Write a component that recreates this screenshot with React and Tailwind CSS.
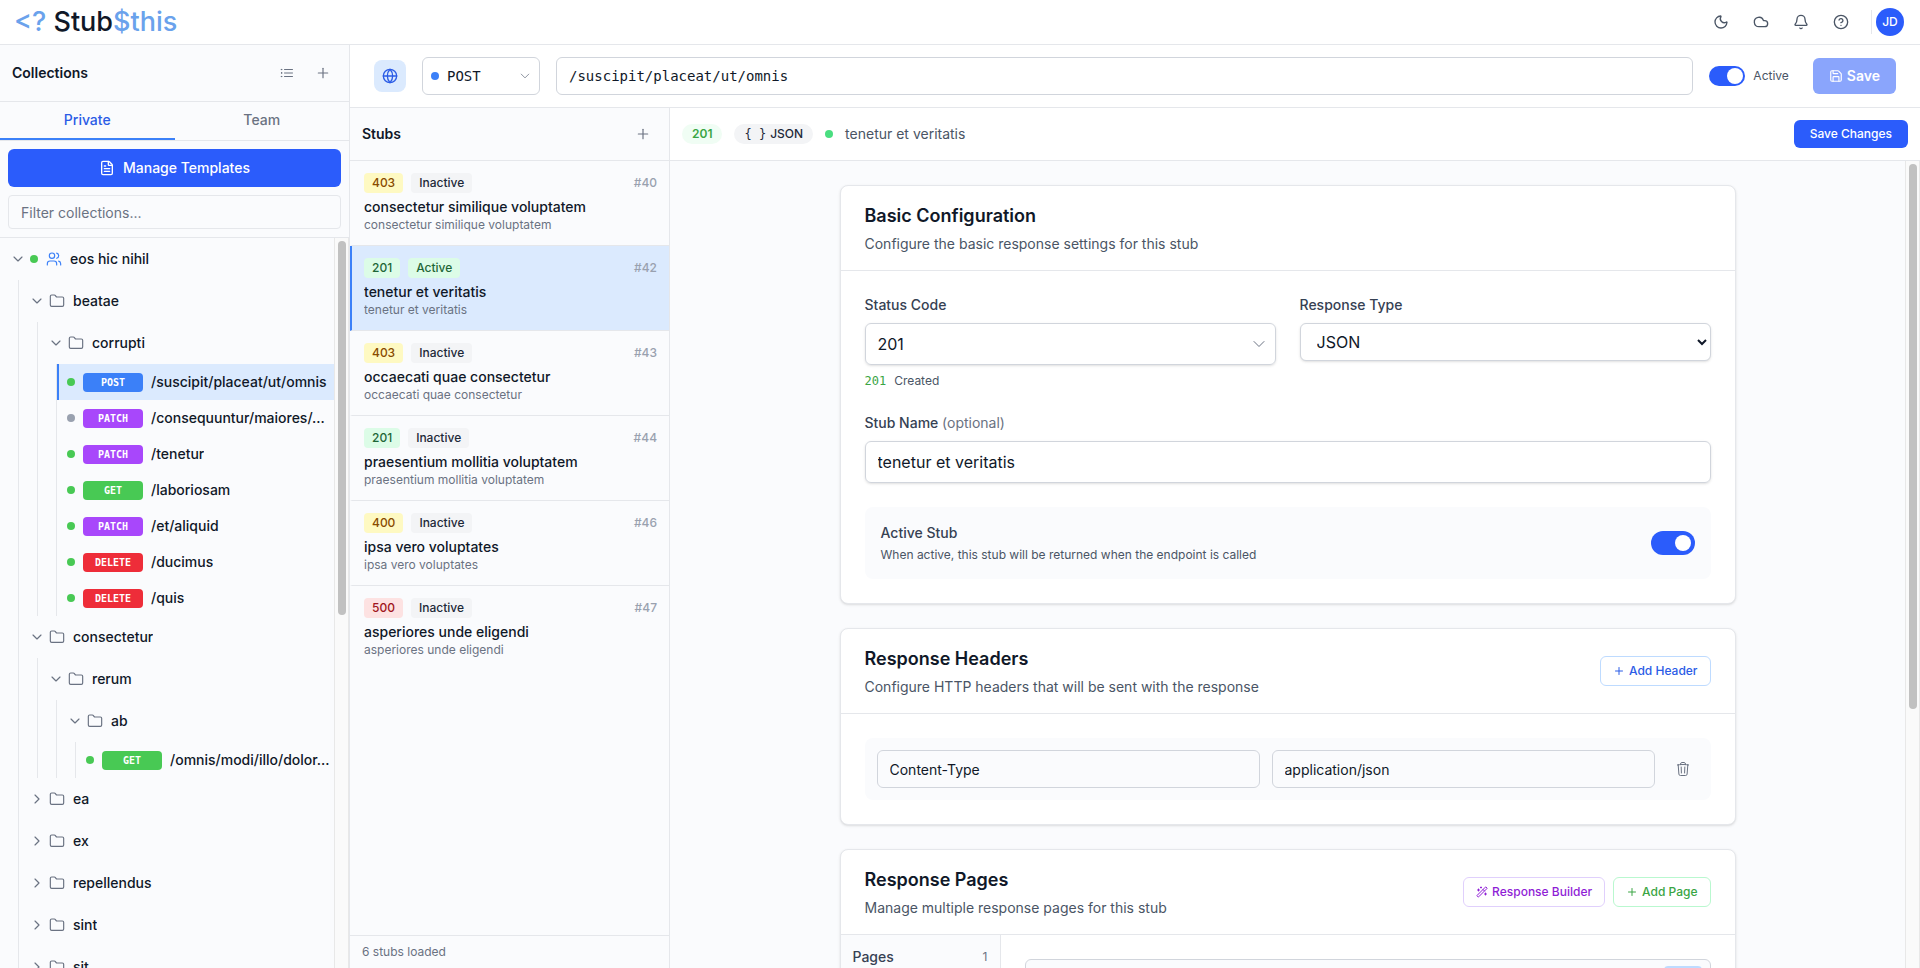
import React, { useState } from 'react';
import {
  Bell,
  ChevronDown as TreeDown,
  ChevronRight as TreeRight,
  CircleQuestionMark,
  Cloud,
  FileText,
  Folder,
  Globe,
  Moon,
  Plus,
  Save,
  Users,
  WandSparkles,
} from 'lucide-react';
import { HiOutlineChevronDown, HiOutlineListBullet, HiOutlineTrash } from 'react-icons/hi2';
import clsx from 'clsx';

const METHOD_BG = {
  GET: 'bg-[#48c954]',
  POST: 'bg-[#3b80f8]',
  PATCH: 'bg-[#a847fb]',
  DELETE: 'bg-[#ee2d39]',
};

const TREE = [
  {
    name: 'eos hic nihil',
    shared: true,
    open: true,
    children: [
      {
        name: 'beatae',
        open: true,
        children: [
          {
            name: 'corrupti',
            open: true,
            children: [
              { method: 'POST', path: '/suscipit/placeat/ut/omnis', active: true, selected: true },
              { method: 'PATCH', path: '/consequuntur/maiores/...', active: false },
              { method: 'PATCH', path: '/tenetur', active: true },
              { method: 'GET', path: '/laboriosam', active: true },
              { method: 'PATCH', path: '/et/aliquid', active: true },
              { method: 'DELETE', path: '/ducimus', active: true },
              { method: 'DELETE', path: '/quis', active: true },
            ],
          },
        ],
      },
      {
        name: 'consectetur',
        open: true,
        children: [
          {
            name: 'rerum',
            open: true,
            children: [
              {
                name: 'ab',
                open: true,
                children: [{ method: 'GET', path: '/omnis/modi/illo/dolor...', active: true }],
              },
            ],
          },
        ],
      },
      { name: 'ea' },
      { name: 'ex' },
      { name: 'repellendus' },
      { name: 'sint' },
      { name: 'sit' },
    ],
  },
];

const STUBS = [
  { id: 40, code: 403, name: 'consectetur similique voluptatem' },
  { id: 42, code: 201, name: 'tenetur et veritatis', active: true },
  { id: 43, code: 403, name: 'occaecati quae consectetur' },
  { id: 44, code: 201, name: 'praesentium mollitia voluptatem' },
  { id: 46, code: 400, name: 'ipsa vero voluptates' },
  { id: 47, code: 500, name: 'asperiores unde eligendi' },
];

function codeTag(code) {
  if (code >= 500) return 'bg-[#fde2e2] text-[#a01520]';
  if (code >= 400) return 'bg-[#fef9c2] text-[#894b00]';
  return 'bg-[#dcfce7] text-[#1f6637]';
}

function IconButton({ label, className, children }) {
  return (
    <button type="button" aria-label={label} className={clsx('flex size-8 items-center justify-center rounded-md', className)}>
      {children}
    </button>
  );
}

function Toggle({ label, small }) {
  const [on, setOn] = useState(true);
  return (
    <button
      type="button"
      role="switch"
      aria-checked={on}
      aria-label={label}
      onClick={() => setOn(!on)}
      className={clsx(
        'flex shrink-0 items-center rounded-full',
        small ? 'h-5 w-9 px-0.5' : 'h-6 w-11 px-1',
        on ? 'justify-end bg-[#2b5cfb]' : 'justify-start bg-gray-300',
      )}
    >
      <span className="size-4 rounded-full bg-white" />
    </button>
  );
}

function ScrollRail({ thumb }) {
  return (
    <div className="flex w-[15px] shrink-0 justify-center border-x border-[#e8e8e8] bg-[#fafafa] pt-[3px]" aria-hidden="true">
      <div className={clsx('w-2 rounded-full bg-[#c1c1c1]', thumb)} />
    </div>
  );
}

/* ---------- sidebar ---------- */

function Endpoint({ item }) {
  return (
    <a
      href="#"
      className={clsx(
        'flex h-9 items-center gap-2 border-l-2 pl-2',
        item.selected ? 'border-[#3b80f8] bg-[#dbeafe]' : 'border-transparent',
      )}
    >
      <span className={clsx('size-2 shrink-0 rounded-full', item.active ? 'bg-[#48c954]' : 'bg-gray-400')} />
      <span className={clsx('w-[60px] shrink-0 rounded py-0.5 text-center font-["DejaVu_Sans_Mono",monospace] text-[10px] leading-[15px] font-bold text-white', METHOD_BG[item.method])}>
        {item.method}
      </span>
      <span className="truncate text-sm font-medium">{item.path}</span>
    </a>
  );
}

function TreeNode({ node }) {
  if (node.method) return <Endpoint item={node} />;
  const Chevron = node.open ? TreeDown : TreeRight;
  return (
    <div>
      <button type="button" className="flex h-[42px] w-full items-center px-2.5 text-left">
        <Chevron className="mr-1 size-4 text-gray-500" strokeWidth={1.75} />
        {node.shared ? (
          <>
            <span className="mr-2 size-2 rounded-full bg-[#48c954]" />
            <Users className="mr-2 size-4 text-[#3b80f8]" strokeWidth={1.75} />
          </>
        ) : (
          <Folder className="mr-2 size-4 text-gray-500" strokeWidth={1.75} />
        )}
        <span className="truncate text-sm font-medium">{node.name}</span>
      </button>
      {node.open && (
        <div className="ml-[18px] border-l border-gray-200">
          {node.children.map((c) => <TreeNode key={c.name || c.path} node={c} />)}
        </div>
      )}
    </div>
  );
}

function Sidebar() {
  return (
    <aside className="flex w-[350px] shrink-0 flex-col border-r border-gray-200 bg-[#fafbfd]">
      <div className="flex h-[57px] shrink-0 items-center justify-between border-b border-gray-200 pr-2.5 pl-3">
        <h2 className="text-sm font-semibold">Collections</h2>
        <div className="flex gap-1 text-gray-500">
          <IconButton label="Compact list"><HiOutlineListBullet className="size-4" /></IconButton>
          <IconButton label="New collection"><Plus className="size-4" strokeWidth={1.75} /></IconButton>
        </div>
      </div>

      <div className="flex h-[39px] shrink-0 border-b border-gray-200 text-sm font-medium">
        <button type="button" className="flex-1 border-b-2 border-[#3b80f8] text-[#2b5ce6]">Private</button>
        <button type="button" className="flex-1 border-b-2 border-transparent text-gray-500">Team</button>
      </div>

      <div className="flex flex-col gap-2 border-b border-gray-200 p-2">
        <button type="button" className="flex h-[38px] items-center justify-center gap-2 rounded-md bg-[#2b5cfb] text-sm font-medium text-white">
          <FileText className="size-4" />
          Manage Templates
        </button>
        <input
          type="text"
          aria-label="Filter collections"
          placeholder="Filter collections..."
          className="h-[34px] w-full rounded border border-gray-200 px-3 text-sm placeholder:text-gray-500"
        />
      </div>

      <div className="flex min-h-0 flex-1">
        <nav className="min-w-0 flex-1 overflow-hidden">
          {TREE.map((n) => <TreeNode key={n.name} node={n} />)}
        </nav>
        <ScrollRail thumb="h-[374px]" />
      </div>
    </aside>
  );
}

/* ---------- stub list ---------- */

function StubList() {
  return (
    <section className="flex w-80 shrink-0 flex-col border-r border-gray-200 bg-[#fafbfd]">
      <div className="flex h-[53px] shrink-0 items-center justify-between border-b border-gray-200 pr-2.5 pl-3">
        <h2 className="text-sm font-semibold">Stubs</h2>
        <IconButton label="Add stub" className="text-gray-500"><Plus className="size-4" strokeWidth={1.75} /></IconButton>
      </div>
      <ul className="min-h-0 flex-1 overflow-hidden">
        {STUBS.map((s, i) => (
          <li
            key={s.id}
            className={clsx(
              'border-l-2 p-3',
              s.active ? 'border-l-[#3b80f8] bg-[#dbeafe]' : 'border-l-transparent',
              i < STUBS.length - 1 && 'border-b border-b-gray-200',
            )}
          >
            <div className="mb-1 flex items-center gap-2 text-xs font-medium">
              <span className={clsx('rounded px-2 py-0.5', codeTag(s.code))}>{s.code}</span>
              <span className={clsx('rounded px-2 py-0.5', s.active ? 'bg-[#dcfce7] text-[#1f6637]' : 'bg-gray-100 text-gray-800')}>
                {s.active ? 'Active' : 'Inactive'}
              </span>
              <span className="ml-auto text-gray-400">#{s.id}</span>
            </div>
            <div className="truncate text-sm font-medium">{s.name}</div>
            <div className="truncate text-xs text-gray-500">{s.name}</div>
          </li>
        ))}
      </ul>
      <div className="border-t border-gray-200 px-3 py-2 text-xs text-gray-500">{STUBS.length} stubs loaded</div>
    </section>
  );
}

/* ---------- stub editor ---------- */

function Card({ title, desc, actions, children }) {
  return (
    <section className="overflow-hidden rounded-lg border border-gray-200 bg-white shadow-sm">
      <div className="flex items-center justify-between border-b border-gray-200 px-6 py-4">
        <div>
          <h3 className="text-lg leading-7 font-semibold">{title}</h3>
          <p className="mt-1 text-sm text-gray-600">{desc}</p>
        </div>
        <div className="flex gap-2">{actions}</div>
      </div>
      {children}
    </section>
  );
}

function OutlineButton({ icon: Icon, color, children }) {
  return (
    <button type="button" className={clsx('flex items-center gap-1 rounded-md border px-3 py-1.5 text-xs font-medium', color)}>
      <Icon className="size-3" />
      {children}
    </button>
  );
}

function Editor() {
  return (
    <section className="flex min-w-0 flex-1 flex-col">
      <div className="flex h-[53px] shrink-0 items-center gap-3 border-b border-gray-200 px-3">
        <span className="rounded-full bg-[#f0fdf4] px-2.5 py-0.5 text-xs font-semibold text-[#3aa544]">201</span>
        <span className="flex items-center gap-1 rounded-full bg-gray-100 px-2.5 py-0.5 text-xs font-medium text-gray-800">
          <span className='font-["DejaVu_Sans_Mono",monospace]'>{'{ }'}</span>
          JSON
        </span>
        <span className="size-2 rounded-full bg-[#4ade80]" />
        <span className="text-sm text-gray-600">tenetur et veritatis</span>
        <button type="button" className="ml-auto rounded-md bg-[#2b5cfb] px-4 py-1.5 text-xs font-medium text-white">Save Changes</button>
      </div>

      <div className="flex min-h-0 flex-1 bg-[#fafbfd]">
        <div className="min-w-0 flex-1 overflow-hidden p-6">
          <div className="mx-auto flex max-w-4xl flex-col gap-6">
            <Card title="Basic Configuration" desc="Configure the basic response settings for this stub">
              <div className="flex flex-col gap-6 p-6">
                <div className="grid grid-cols-2 items-start gap-6">
                  <div>
                    <label htmlFor="status" className="mb-2 block text-sm font-medium text-gray-700">Status Code</label>
                    <div className="flex h-[42px] items-center rounded-md border border-gray-300 pr-2 shadow-sm">
                      <input id="status" type="text" defaultValue="201" className="h-full min-w-0 flex-1 px-3 text-base outline-none" />
                      <HiOutlineChevronDown className="size-4 text-gray-500" />
                    </div>
                    <div className="mt-2 flex gap-2 text-xs">
                      <span className='font-["DejaVu_Sans_Mono",monospace] text-[#3aa544]'>201</span>
                      <span className="text-gray-600">Created</span>
                    </div>
                  </div>
                  <div>
                    <label htmlFor="type" className="mb-2 block text-sm font-medium text-gray-700">Response Type</label>
                    <select id="type" className="h-[38px] w-full rounded-md border border-gray-300 bg-white px-3 text-base shadow-sm">
                      <option>JSON</option>
                    </select>
                  </div>
                </div>

                <div>
                  <label htmlFor="name" className="mb-2 block text-sm font-medium text-gray-700">
                    Stub Name <span className="font-normal text-gray-500">(optional)</span>
                  </label>
                  <input id="name" type="text" defaultValue="tenetur et veritatis" className="h-[42px] w-full rounded-md border border-gray-300 px-3 text-base shadow-sm" />
                </div>

                <div className="flex items-center justify-between rounded-lg bg-[#fafbfd] p-4">
                  <div>
                    <div className="text-sm font-medium text-gray-700">Active Stub</div>
                    <p className="mt-1 text-xs text-gray-600">When active, this stub will be returned when the endpoint is called</p>
                  </div>
                  <Toggle label="Active Stub" />
                </div>
              </div>
            </Card>

            <Card
              title="Response Headers"
              desc="Configure HTTP headers that will be sent with the response"
              actions={<OutlineButton icon={Plus} color="border-[#bedbff] text-[#2b5ce6]">Add Header</OutlineButton>}
            >
              <div className="p-6">
                <div className="flex items-center gap-3 rounded-lg bg-[#fafbfd] p-3">
                  <input aria-label="Header name" type="text" defaultValue="Content-Type" className="h-[38px] min-w-0 flex-1 rounded-md border border-gray-300 px-3 text-sm" />
                  <input aria-label="Header value" type="text" defaultValue="application/json" className="h-[38px] min-w-0 flex-1 rounded-md border border-gray-300 px-3 text-sm" />
                  <IconButton label="Remove header" className="text-gray-500"><HiOutlineTrash className="size-4" /></IconButton>
                </div>
              </div>
            </Card>

            <Card
              title="Response Pages"
              desc="Manage multiple response pages for this stub"
              actions={
                <>
                  <OutlineButton icon={WandSparkles} color="border-[#e0d0fc] text-[#8f1ed6]">Response Builder</OutlineButton>
                  <OutlineButton icon={Plus} color="border-[#b9f8cf] text-[#3aa544]">Add Page</OutlineButton>
                </>
              }
            >
              <div className="flex">
                <div className="flex h-96 w-40 items-start justify-between border-r border-gray-200 bg-[#fafbfd] p-3 text-gray-700">
                  <span className="text-sm font-medium">Pages</span>
                  <span className="text-xs leading-5 text-gray-500">1</span>
                </div>
                <div className="flex-1 p-6">
                  <div className="flex h-[42px] justify-end rounded-md border border-gray-300 bg-[#fafbfd] px-2 py-1.5">
                    <button type="button" aria-label="Format" className="w-[38px] rounded bg-[#bedbff]" />
                  </div>
                </div>
              </div>
            </Card>
          </div>
        </div>
        <ScrollRail thumb="h-[545px]" />
      </div>
    </section>
  );
}

function EndpointBar() {
  return (
    <div className="flex items-center gap-4 border-b border-gray-200 px-6 py-3">
      <div className="flex size-8 items-center justify-center rounded-lg bg-[#dbeafe] text-[#2b5ce6]">
        <Globe className="size-4" />
      </div>
      <button type="button" aria-label="HTTP method" className="flex h-[38px] w-[118px] items-center rounded-md border border-gray-300 px-2">
        <span className="mr-2 size-2 rounded-full bg-[#3b80f8]" />
        <span className='font-["DejaVu_Sans_Mono",monospace] text-sm'>POST</span>
        <HiOutlineChevronDown className="ml-auto size-3 text-gray-500" />
      </button>
      <input
        type="text"
        aria-label="Endpoint path"
        defaultValue="/suscipit/placeat/ut/omnis"
        className='h-[38px] min-w-0 flex-1 rounded-md border border-gray-300 px-3 font-["DejaVu_Sans_Mono",monospace] text-sm'
      />
      <div className="flex items-center gap-2">
        <Toggle label="Endpoint active" small />
        <span className="text-xs text-gray-600">Active</span>
      </div>
      <button type="button" className="ml-2 flex h-9 items-center gap-1 rounded-md bg-[#2b5cfb] px-4 text-sm font-semibold text-white opacity-55">
        <Save className="size-3.5" />
        Save
      </button>
    </div>
  );
}

export default function App() {
  return (
    <div className='flex h-screen flex-col overflow-hidden bg-white font-["Inter",sans-serif] text-gray-900'>
      <header className="flex h-[45px] shrink-0 items-center justify-between border-b border-gray-200 pr-4 pl-3.5">
        <a href="#" className="text-[27px] leading-8 font-medium text-[#6aa2ec]">
          &lt;? <span className="text-gray-900">Stub</span>$this
        </a>
        <div className="flex items-center gap-2 text-gray-600">
          <IconButton label="Dark mode"><Moon className="size-4" /></IconButton>
          <IconButton label="Cloud"><Cloud className="size-4" /></IconButton>
          <IconButton label="Notifications"><Bell className="size-4" /></IconButton>
          <IconButton label="Help"><CircleQuestionMark className="size-4" /></IconButton>
          <div className="ml-1.5 flex h-6 items-center border-l border-gray-200 pl-1">
            <button type="button" className="size-7 rounded-full bg-[#2b5cfb] text-xs font-medium text-white">JD</button>
          </div>
        </div>
      </header>
      <div className="flex min-h-0 flex-1">
        <Sidebar />
        <main className="flex min-w-0 flex-1 flex-col">
          <EndpointBar />
          <div className="flex min-h-0 flex-1">
            <StubList />
            <Editor />
          </div>
        </main>
      </div>
    </div>
  );
}
